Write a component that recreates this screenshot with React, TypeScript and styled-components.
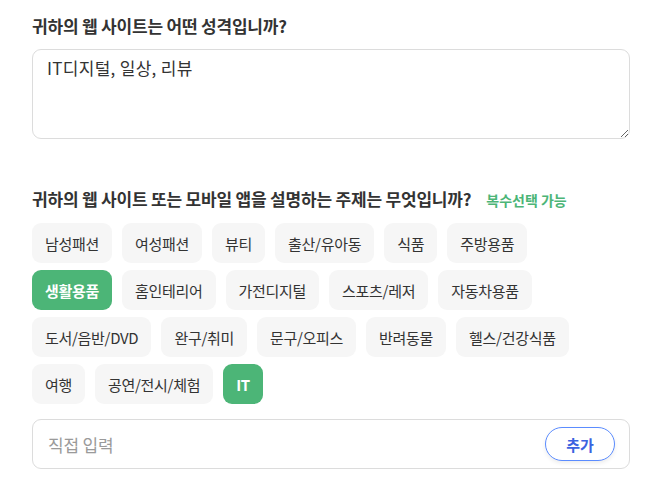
import React, { useState } from 'react'
import styled, { createGlobalStyle } from 'styled-components'

const GlobalStyle = createGlobalStyle`
  body {
    margin: 0;
    background: #fff;
    font-family: "Noto Sans CJK KR", "Noto Sans", sans-serif;
    color: #333;
  }
`

const Page = styled.div`
  width: 598px;
  padding: 14px 0 0 32px;
`

const Question = styled.h2`
  display: flex;
  align-items: baseline;
  gap: 15px;
  margin: 0 0 11px;
  font-size: 17px;
  line-height: 24px;
  font-weight: 700;
  letter-spacing: -0.2px;
  color: #333;
`

const Hint = styled.span`
  font-size: 14px;
  font-weight: 700;
  color: #4cb577;
  letter-spacing: 0;
`

const TextArea = styled.textarea`
  display: block;
  box-sizing: border-box;
  width: 100%;
  height: 90px;
  padding: 5px 14px;
  border: 1px solid #dcdcdc;
  border-radius: 9px;
  font-family: inherit;
  font-size: 17px;
  letter-spacing: 0.3px;
  color: #333;
  resize: vertical;
  outline: none;
  margin-bottom: 48px;
`

const Chips = styled.div`
  display: flex;
  flex-wrap: wrap;
  gap: 7px 10px;
  max-width: 560px;
  margin-bottom: 15px;
`

const Chip = styled.button<{ $active: boolean }>`
  height: 40px;
  padding: 0 13px;
  border: none;
  border-radius: 9px;
  background: ${(p) => (p.$active ? '#4cb577' : '#f6f6f6')};
  color: ${(p) => (p.$active ? '#fff' : '#333')};
  font-family: inherit;
  font-size: 15px;
  font-weight: ${(p) => (p.$active ? 700 : 400)};
  letter-spacing: -0.3px;
  cursor: pointer;
`

const InputRow = styled.div`
  display: flex;
  align-items: center;
  box-sizing: border-box;
  height: 50px;
  padding: 0 14px 0 13px;
  border: 1px solid #dcdcdc;
  border-radius: 9px;
`

const Input = styled.input`
  flex: 1;
  border: none;
  outline: none;
  font-family: inherit;
  font-size: 17px;
  letter-spacing: -0.2px;
  color: #333;
  &::placeholder {
    color: #9a9a9a;
  }
`

const AddButton = styled.button`
  width: 70px;
  height: 34px;
  border: 1px solid #5b8cff;
  border-radius: 17px;
  background: #fff;
  color: #3b63e0;
  font-family: inherit;
  font-size: 15px;
  font-weight: 700;
  box-shadow: 0 2px 4px rgba(0, 0, 0, 0.08);
  cursor: pointer;
`

const TOPICS = [
  '남성패션', '여성패션', '뷰티', '출산/유아동', '식품', '주방용품',
  '생활용품', '홈인테리어', '가전디지털', '스포츠/레저', '자동차용품',
  '도서/음반/DVD', '완구/취미', '문구/오피스', '반려동물', '헬스/건강식품',
  '여행', '공연/전시/체험', 'IT',
]

export default function App() {
  const [selected, setSelected] = useState<string[]>(['생활용품', 'IT'])

  const toggle = (t: string) =>
    setSelected((s) => (s.includes(t) ? s.filter((x) => x !== t) : [...s, t]))

  return (
    <Page>
      <GlobalStyle />
      <Question>귀하의 웹 사이트는 어떤 성격입니까?</Question>
      <TextArea defaultValue="IT디지털, 일상, 리뷰" />

      <Question>
        귀하의 웹 사이트 또는 모바일 앱을 설명하는 주제는 무엇입니까?
        <Hint>복수선택 가능</Hint>
      </Question>
      <Chips>
        {TOPICS.map((t) => (
          <Chip key={t} $active={selected.includes(t)} onClick={() => toggle(t)}>
            {t}
          </Chip>
        ))}
      </Chips>

      <InputRow>
        <Input placeholder="직접 입력" />
        <AddButton>추가</AddButton>
      </InputRow>
    </Page>
  )
}
